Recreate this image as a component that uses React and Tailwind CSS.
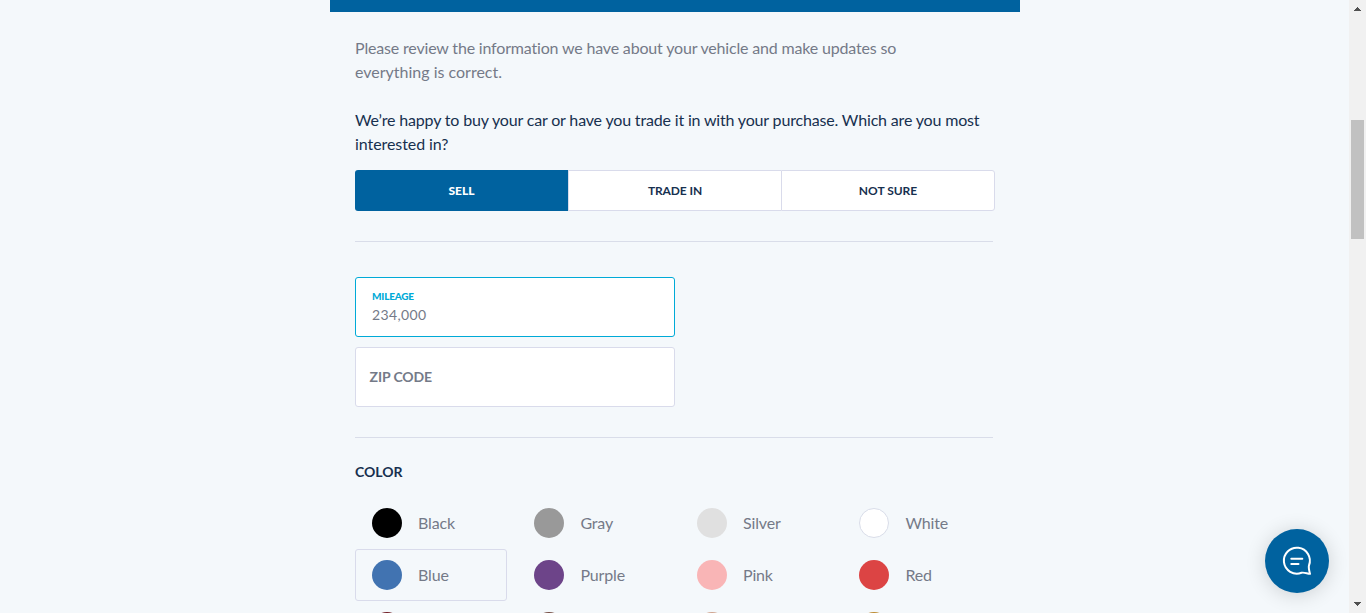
const COLORS = [
  { name: 'Black', swatch: 'bg-black' },
  { name: 'Gray', swatch: 'bg-[#999999]' },
  { name: 'Silver', swatch: 'bg-[#e0e0e0]' },
  { name: 'White', swatch: 'bg-white border border-[#d9dde9]' },
  { name: 'Blue', swatch: 'bg-[#4173b1]', selected: true },
  { name: 'Purple', swatch: 'bg-[#6d4489]' },
  { name: 'Pink', swatch: 'bg-[#f9b5b6]' },
  { name: 'Red', swatch: 'bg-[#dc4444]' },
  { name: '', swatch: 'bg-[#701c24]' },
  { name: '', swatch: 'bg-[#744c43]' },
  { name: '', swatch: 'bg-[#cfa48f]' },
  { name: '', swatch: 'bg-[#bd8b32]' },
];

function Swatch({ name, swatch, selected }) {
  return (
    <div
      className={`flex h-[52px] w-[152px] items-center gap-4 rounded-[3px] border pl-4 ${
        selected ? 'border-[#d9dbeb]' : 'border-transparent'
      }`}
    >
      <span className={`size-[30px] shrink-0 rounded-full ${swatch}`} />
      <span className="text-base tracking-[-0.15px]">{name}</span>
    </div>
  );
}

function Scrollbar() {
  return (
    <div className="flex h-full w-[17px] shrink-0 flex-col items-center bg-[#f1f1f1]">
      <svg className="h-[17px] w-[17px] shrink-0" viewBox="0 0 17 17" shapeRendering="crispEdges">
        <path d="M8 7h1v1h1v1h1v1h1v1H5v-1h1V9h1V8h1z" fill="#505050" />
      </svg>
      <div className="mt-[103px] h-[119px] w-[13px] bg-[#c1c1c1]" />
      <svg className="mt-auto h-[17px] w-[17px] shrink-0" viewBox="0 0 17 17" shapeRendering="crispEdges">
        <path d="M5 6h7v1h-1v1h-1v1H9v1H8V9H7V8H6V7H5z" fill="#505050" />
      </svg>
    </div>
  );
}

export default function App() {
  return (
    <div className="flex h-[613px] w-full overflow-hidden bg-[#f4f8fb] font-['Lato',sans-serif] text-[#747a88]">
      <main className="flex h-full min-w-0 flex-1 justify-center overflow-hidden pr-px pl-[2px]">
        <div className="w-[690px] shrink-0">
          <div className="h-3 bg-[#00629f]" />
          <div className="px-[25px] pt-6">
            <p className="text-base leading-6 whitespace-nowrap">
              <span className="tracking-[-0.175px]">Please review the information we have about your vehicle and make updates so</span>
              <br />
              <span>everything is correct.</span>
            </p>
            <p className="mt-6 text-base leading-6 whitespace-nowrap text-[#17304f]">
              <span className="tracking-[-0.168px]">We’re happy to buy your car or have you trade it in with your purchase. Which are you most</span>
              <br />
              <span className="tracking-[-0.07px]">interested in?</span>
            </p>
            <div className="mt-[14px] flex h-[41px] text-xs font-bold text-[#17304f]">
              <button className="w-[213px] rounded-l-[3px] bg-[#00629f] font-black text-white">SELL</button>
              <button className="w-[213px] border-y border-l border-[#d9dbeb] bg-white tracking-[-0.1px]">TRADE IN</button>
              <button className="w-[214px] rounded-r-[3px] border border-[#d9dbeb] bg-white">NOT SURE</button>
            </div>
            <div className="mt-[30px] h-px w-[638px] bg-[#d9dde9]" />
            <div className="mt-[35px] flex h-[60px] w-80 flex-col rounded-[3px] border border-[#00aad7] bg-white pt-[11px] pl-4">
              <label className="text-[10px] leading-[14px] font-black tracking-[-0.2px] text-[#00aad7]">MILEAGE</label>
              <span className="mt-px text-sm leading-[22px] tracking-[0.35px]">234,000</span>
            </div>
            <div className="mt-[10px] flex h-[60px] w-80 items-center rounded-[3px] border border-[#d9dbeb] bg-white pl-[13.5px] text-sm font-bold tracking-[-0.1px]">
              <span>ZIP CODE</span>
            </div>
            <div className="mt-[30px] h-px w-[638px] bg-[#d9dde9]" />
            <h2 className="mt-6 text-sm leading-5 font-bold text-[#17304f]">
              <span>COLOR</span>
            </h2>
            <div className="mt-[15px] grid grid-cols-[162.4px_162.6px_162.4px_152px]">
              {COLORS.map((c, i) => (
                <Swatch key={i} {...c} />
              ))}
            </div>
          </div>
        </div>
      </main>
      <Scrollbar />
      <button
        aria-label="Chat"
        className="absolute top-[529px] left-[1265px] flex size-16 items-center justify-center rounded-full bg-[#00629f] shadow-[0_2px_20px_rgba(0,0,0,0.16)]"
      >
        <svg className="size-8" viewBox="0 0 32 32" fill="none" stroke="white" strokeWidth="2">
          <path d="M28 20.3A13 13 0 1 0 20.5 27.8C22.5 27.1 25.5 28.3 29 28.8C28.2 25.6 27.3 22.6 28 20.3Z" strokeLinejoin="round" />
          <path d="M10.3 13.7H21.3M10.3 19H17.5" strokeLinecap="round" />
        </svg>
      </button>
    </div>
  );
}
